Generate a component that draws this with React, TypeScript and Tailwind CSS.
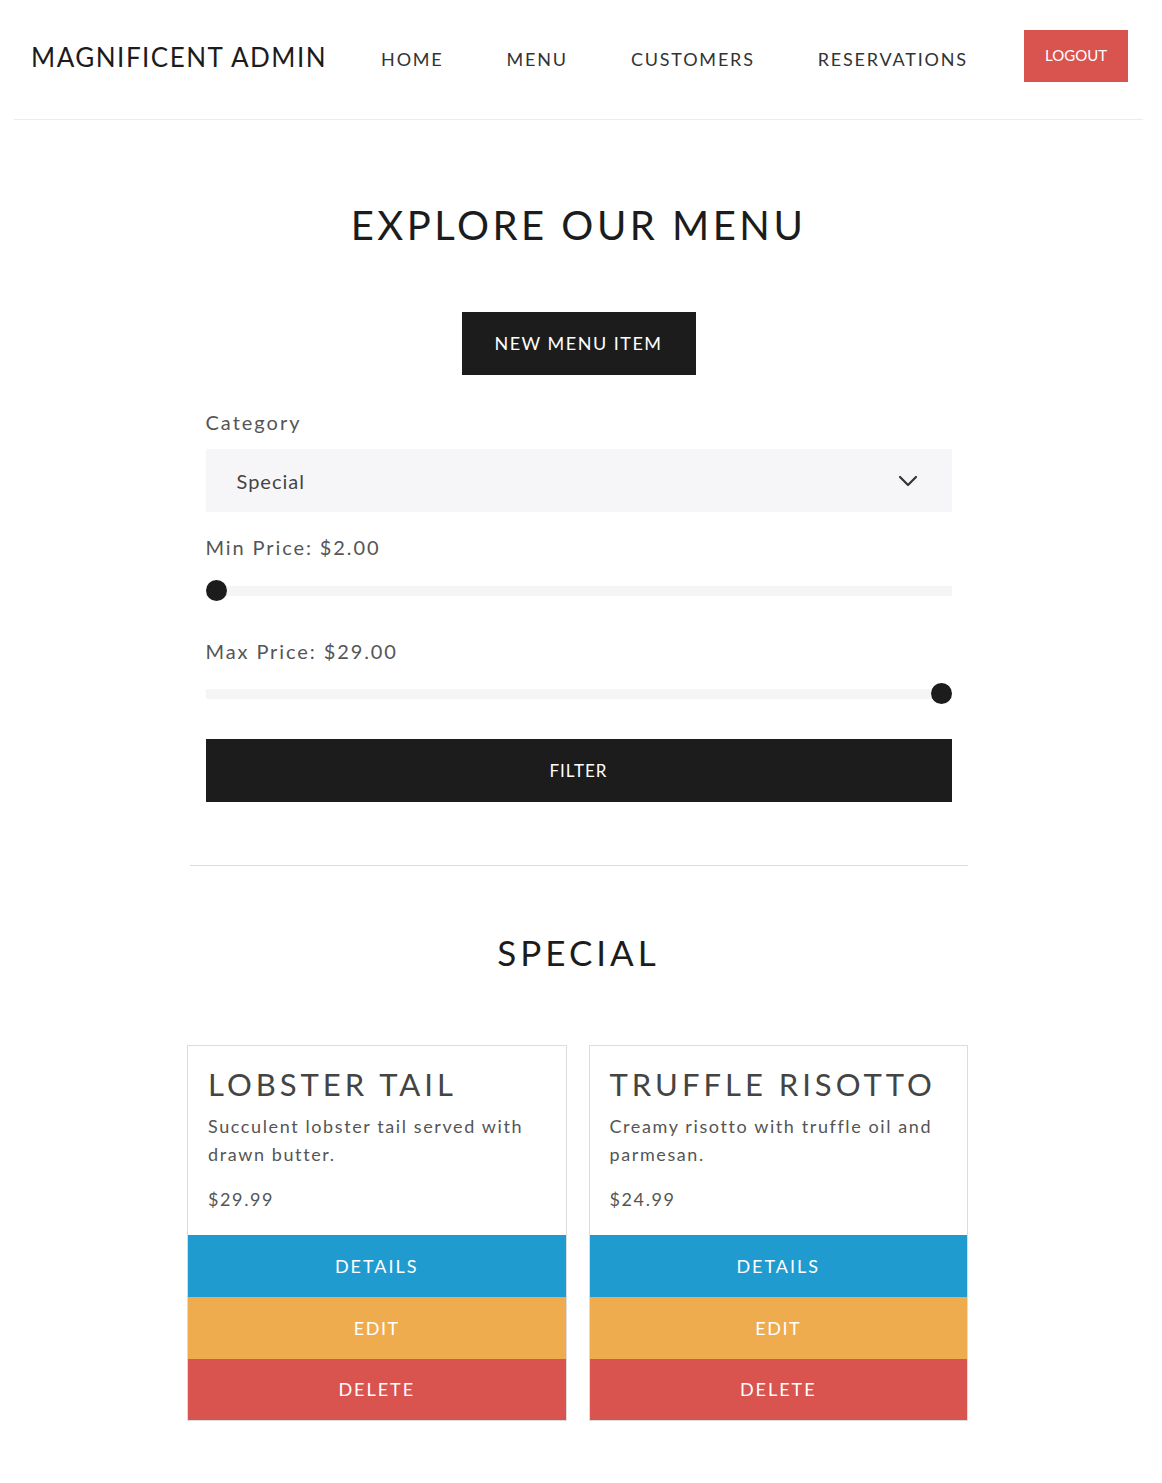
import React, { useState } from 'react';
import { ChevronDown } from 'lucide-react';

const ITEMS = [
  { id: 1, name: 'Lobster Tail', description: 'Succulent lobster tail served with drawn butter.', price: 29.99 },
  { id: 2, name: 'Truffle Risotto', description: 'Creamy risotto with truffle oil and parmesan.', price: 24.99 },
];

const NAV = ['Home', 'Menu', 'Customers', 'Reservations'];

function Slider({ value, min, max }: { value: number; min: number; max: number }) {
  const pct = ((value - min) / (max - min)) * 100;
  return (
    <div className="relative h-[22px] flex items-center">
      <div className="w-full h-[10px] bg-[#f5f5f6]" />
      <div
        className="absolute top-0 w-[21px] h-[21px] rounded-full bg-[#1c1c1c]"
        style={{ left: `calc(${pct}% - ${(pct / 100) * 21}px)` }}
      />
    </div>
  );
}

function MenuCard({ item }: { item: (typeof ITEMS)[number] }) {
  return (
    <div className="border border-[#dcdcdc] flex flex-col">
      <div className="px-5 pt-[20px] pb-[22px]">
        <h3 className="text-[31px] leading-[36px] tracking-[4px] uppercase text-[#444]">{item.name}</h3>
        <p className="mt-[10px] text-[18px] leading-[28px] tracking-[1.6px] text-[#555]">{item.description}</p>
        <p className="mt-[17px] text-[18px] leading-[28px] tracking-[1.6px] text-[#555]">${item.price.toFixed(2)}</p>
      </div>
      <button className="h-[62px] bg-[#1f9bcf] text-white text-[18px] tracking-[2px]">DETAILS</button>
      <button className="h-[62px] bg-[#efac4e] text-white text-[18px] tracking-[1.5px]">EDIT</button>
      <button className="h-[61px] bg-[#d9534f] text-white text-[18px] tracking-[2px]">DELETE</button>
    </div>
  );
}

export default function App() {
  const [category] = useState('Special');

  return (
    <div className="min-h-screen bg-white text-[#1c1c1c]" style={{ fontFamily: 'Lato, "Noto Sans", sans-serif' }}>
      <div className="ml-[14px] w-[1129px]">
        {/* Header */}
        <header className="h-[120px] flex items-center border-b border-[#ececec] pl-[17px] pr-[15px]">
          <div className="text-[26px] tracking-[1.5px] text-[#1c1c1c] mt-[-4px]">MAGNIFICENT ADMIN</div>
          <nav className="flex items-center ml-[54px] gap-[63px]">
            {NAV.map((n) => (
              <a key={n} className="text-[18px] tracking-[1.8px] uppercase text-[#333]">{n}</a>
            ))}
          </nav>
          <button className="ml-auto mt-[-8px] w-[104px] h-[52px] bg-[#d9534f] text-white text-[15px]">LOGOUT</button>
        </header>

        <main className="w-[778px] mx-auto">
          <h1 className="mt-[81px] text-center text-[40px] leading-[48px] tracking-[3.5px] text-[#1c1c1c]">EXPLORE OUR MENU</h1>

          <div className="mt-[63px] flex justify-center">
            <button className="w-[234px] h-[63px] bg-[#1c1c1c] text-white text-[18px] tracking-[1.5px]">NEW MENU ITEM</button>
          </div>

          <form className="px-4 mt-[32px]" onSubmit={(e) => e.preventDefault()}>
            <label className="block text-[20px] leading-[30px] tracking-[2px] text-[#555]">Category</label>
            <div className="mt-[12px] h-[63px] bg-[#f6f6f8] flex items-center justify-between pl-[31px] pr-[28px]">
              <span className="text-[20px] tracking-[1px] text-[#444]">{category}</span>
              <ChevronDown size={32} strokeWidth={1.6} className="text-[#333]" />
            </div>

            <label className="block mt-[20px] text-[20px] leading-[30px] tracking-[1.9px] text-[#555]">Min Price: $2.00</label>
            <div className="mt-[18px]">
              <Slider value={2} min={2} max={29} />
            </div>

            <label className="block mt-[34px] text-[20px] leading-[30px] tracking-[1.9px] text-[#555]">Max Price: $29.00</label>
            <div className="mt-[17px]">
              <Slider value={29} min={2} max={29} />
            </div>

            <button type="submit" className="mt-[34px] w-full h-[63px] bg-[#1c1c1c] text-white text-[17px] tracking-[1px]">FILTER</button>
          </form>

          <hr className="mt-[63px] border-0 border-t border-[#dddddd]" />

          <h2 className="mt-[66px] text-center text-[35px] leading-[40px] tracking-[4px] text-[#1c1c1c]">SPECIAL</h2>
        </main>

        <section className="w-[781px] ml-[173px] mt-[73px] pb-[63px] grid grid-cols-2 gap-[22px]">
          {ITEMS.map((item) => (
            <MenuCard key={item.id} item={item} />
          ))}
        </section>
      </div>
    </div>
  );
}
